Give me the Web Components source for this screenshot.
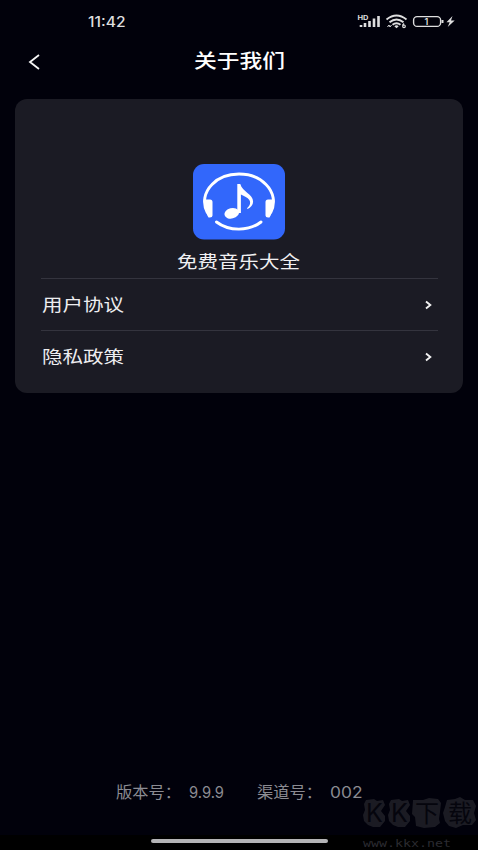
<!DOCTYPE html>
<html lang="zh-CN"><head><meta charset="utf-8"><title>关于我们</title>
<style>
html,body{margin:0;height:100%;background:#01010b;overflow:hidden}
body{font-family:Inter,"Noto Sans CJK SC",sans-serif;color:#fff}
</style></head><body>
<about-page></about-page>
<script>
const define=(name,html)=>customElements.define(name,class extends HTMLElement{
  connectedCallback(){
    if(this.shadowRoot)return;
    const root=this.attachShadow({mode:'open'});
    const t=document.createElement('template');
    t.innerHTML=typeof html==='function'?html(this):html;
    root.append(t.content.cloneNode(true));
  }
});

/* Text set to an exact advance width */
define('wide-text',el=>{
  const w=+el.getAttribute('w'),s=+el.getAttribute('size'),h=Math.ceil(s*1.4);
  return `<style>:host{display:block;flex:none;width:${w}px;height:${h}px}svg{display:block;overflow:visible}
  text{fill:currentColor;font-family:${el.getAttribute('face')||'Inter'},"Noto Sans CJK SC",sans-serif;font-size:${s}px;font-weight:${el.getAttribute('weight')||400}}</style>
  <svg width="${w}" height="${h}"><text x="0" y="${s*1.06}" textLength="${w}" lengthAdjust="spacingAndGlyphs">${el.getAttribute('text')}</text></svg>`;
});

define('status-bar',`<style>:host{display:flex;height:40px;box-sizing:border-box;padding:12px 23px 0 88px;justify-content:space-between;align-items:flex-start;color:#dededf}
svg{display:block;margin-top:1px}</style>
<wide-text w="37.500" size="14" weight="500" text="11:42"></wide-text>
<svg width="98" height="17" viewBox="357 13 98 17" fill="none" stroke="#dededf">
<text x="357.5" y="20.2" font-family="Inter,sans-serif" font-size="6.5" font-weight="700" textLength="11" lengthAdjust="spacingAndGlyphs" fill="#dededf" stroke="none">HD</text>
<path stroke-width="2.6" d="M361 27v-2M365 27v-4M369.5 27v-6M374 27v-8.500M378.500 27v-11"/>
<g stroke-width="1.900"><path d="M386.500 19.500Q396.500 11.500 406.500 19.500"/><path d="M389.500 22.300Q396.500 16.500 403.500 22.300"/><path d="M392.500 24.800Q396.500 21.500 400.500 24.800"/></g>
<path fill="#dededf" stroke="none" d="M394.300 26.200q2.200-1.700 4.400 0l-2.200 2z"/><path stroke-width="1" d="M387.500 27l1.500-2 1 2 1.500-2"/><path stroke-width="1.300" d="M404 23.500l-1.500 2"/><circle cx="404" cy="26.300" r="1.300" stroke-width="1.200"/>
<rect x="413.600" y="16.600" width="27" height="9.800" rx="3.500" stroke-width="1.400"/><path stroke-width="2" d="M442.500 20v3"/>
<text x="424.500" y="25" font-family="Inter,sans-serif" font-size="9" font-weight="600" fill="#dededf" stroke="none">1</text>
<path fill="#dededf" stroke="none" d="M452.500 16L446.500 22.300h3.200l-2 4.700 7-6.600h-3.700z"/></svg>`);

define('nav-header',`<style>:host{display:grid;grid-template-columns:1fr auto 1fr;height:59px;box-sizing:border-box;padding:7px 28px 0}
svg{display:block;margin-top:6px}slot{display:block;padding-top:1px}</style>
<svg width="14" height="18" fill="none" stroke="#f5f5f5" stroke-width="1.8"><path d="M11 2L2 9l9 7"/></svg><slot></slot><i></i>`);

define('app-logo',`<style>:host{display:block;width:92px;height:76px}svg{display:block}</style>
<svg width="92" height="76" viewBox="193 164 92 76"><rect x="193" y="164" width="92" height="75.500" rx="11" fill="#3267fb"/>
<g fill="none" stroke="#fff" stroke-width="2.900"><path d="M207.500 213C202 203 204.500 192 212 184.500C225 170.500 253 170.500 266 184.500C273.500 192 276 203 270.500 213"/><path stroke-linecap="round" d="M216.500 222C229 231.500 249 231.500 261 222"/></g>
<path fill="#fff" d="M205.500 199.500h4.500q2.500 0 2.500 2.500v13.500q0 2-2.500 2h-1.500q-5-8-3-18zM272.500 199.500h-4.500q-2.500 0-2.500 2.500v13.500q0 2 2.500 2h1.500q5-8 3-18z"/>
<ellipse cx="231.700" cy="213.300" rx="7.400" ry="5.200" transform="rotate(-14 231.700 213.300)" fill="#fff"/>
<path fill="#fff" d="M237.300 184h3c2 8 12.800 10 12.800 17.500c0 3.500-2.500 6-5.500 7.500l-.6-.8c3-2.500 4-5.500 2.300-8.200c-1.600-2.700-5-3.500-8.400-5.500V213h-3.600z"/></svg>`);

define('menu-row',`<style>:host{display:flex;justify-content:space-between;height:52px;box-sizing:border-box;border-top:1px solid #34343e;padding:14px 6px 0 .7px;color:#ededf0}svg{display:block;margin-top:7px}</style>
<slot></slot><svg width="7" height="10" fill="none" stroke="#f2f2f2" stroke-width="1.900"><path d="M1 1.500L5.300 5L1 8.500"/></svg>`);

define('info-card',`<style>:host{display:flex;flex-direction:column;height:294px;box-sizing:border-box;margin:0 15px;padding:65px 25px 0 26px;background:#1b1b24;border-radius:12px}
.brand{display:flex;flex-direction:column;align-items:center;height:114px;margin-right:2px}wide-text{margin-top:9.500px;color:#f0f0f2}</style>
<div class="brand"><app-logo></app-logo><wide-text w="123" size="17" text="免费音乐大全"></wide-text></div><slot></slot>`);

define('site-mark',`<style>:host{position:absolute;right:0;bottom:0;width:118px;height:54px}svg{display:block}</style>
<svg width="118" height="54" viewBox="360 796 118 54"><g fill="#1b1b23"><path d="M366 800l8-1 3 2 6-1 2 5-4 6 4 5 0 5-5 6-7 0-5-2-4-4-1-6 2-5-1-6z"/><path d="M391 800l8-1 3 2 6-1 2 5-4 6 4 5 0 5-5 6-7 0-5-2-4-4-1-6 2-5-1-6z"/><path d="M413 800l10 0 6-2 9 1 3 4-1 9-1 7 1 4-5 4-11 1-8-2-1-9-3-3z"/><path d="M447 800l8-1 5-2 5 3 8 0 3 6-2 7 2 7-4 5-9 0-7 3-7-2-4-5-2-8 2-6z"/></g>
<g fill="#05050d" font-family="Inter,'Noto Sans CJK SC',sans-serif"><text x="366 391" y="822" font-size="25">KK</text><text x="415 448" y="822" font-size="24">下载</text></g>
<text x="363" y="847" font-family="'DejaVu Sans Mono',monospace" font-size="11" textLength="88" lengthAdjust="spacingAndGlyphs" fill="#2b2b31">www.kkx.net</text></svg>`);

define('page-footer',`<style>:host{display:block;position:relative;height:85px;margin-top:auto}
.info{display:flex;padding:17px 0 0 116px;gap:8px;color:#8b8b92}.gap{width:17px}.home{display:flex;justify-content:center;align-items:flex-end;height:39px}.home i{width:177px;height:4px;border-radius:2px;background:#b4b4b6}.base{position:absolute;inset:70px 0 0;background:#000}.info,.home{position:relative}</style>
<div class="base"></div><div class="info"><wide-text w="65" size="15.500" text="版本号："></wide-text><wide-text w="35" size="15.500" text="9.9.9"></wide-text><span class="gap"></span><wide-text w="65" size="15.500" text="渠道号："></wide-text><wide-text w="32.500" size="15.500" text="002"></wide-text></div>
<div class="home"><i></i></div><site-mark></site-mark>`);

define('about-page',`<style>:host{display:flex;flex-direction:column;height:850px;background:#01010b}</style>
<status-bar></status-bar><nav-header><wide-text w="91" size="19" weight="500" text="关于我们"></wide-text></nav-header>
<info-card><menu-row><wide-text w="82" size="17" text="用户协议"></wide-text></menu-row><menu-row><wide-text w="82" size="17" text="隐私政策"></wide-text></menu-row></info-card>
<page-footer></page-footer>`);
</script></body></html>
